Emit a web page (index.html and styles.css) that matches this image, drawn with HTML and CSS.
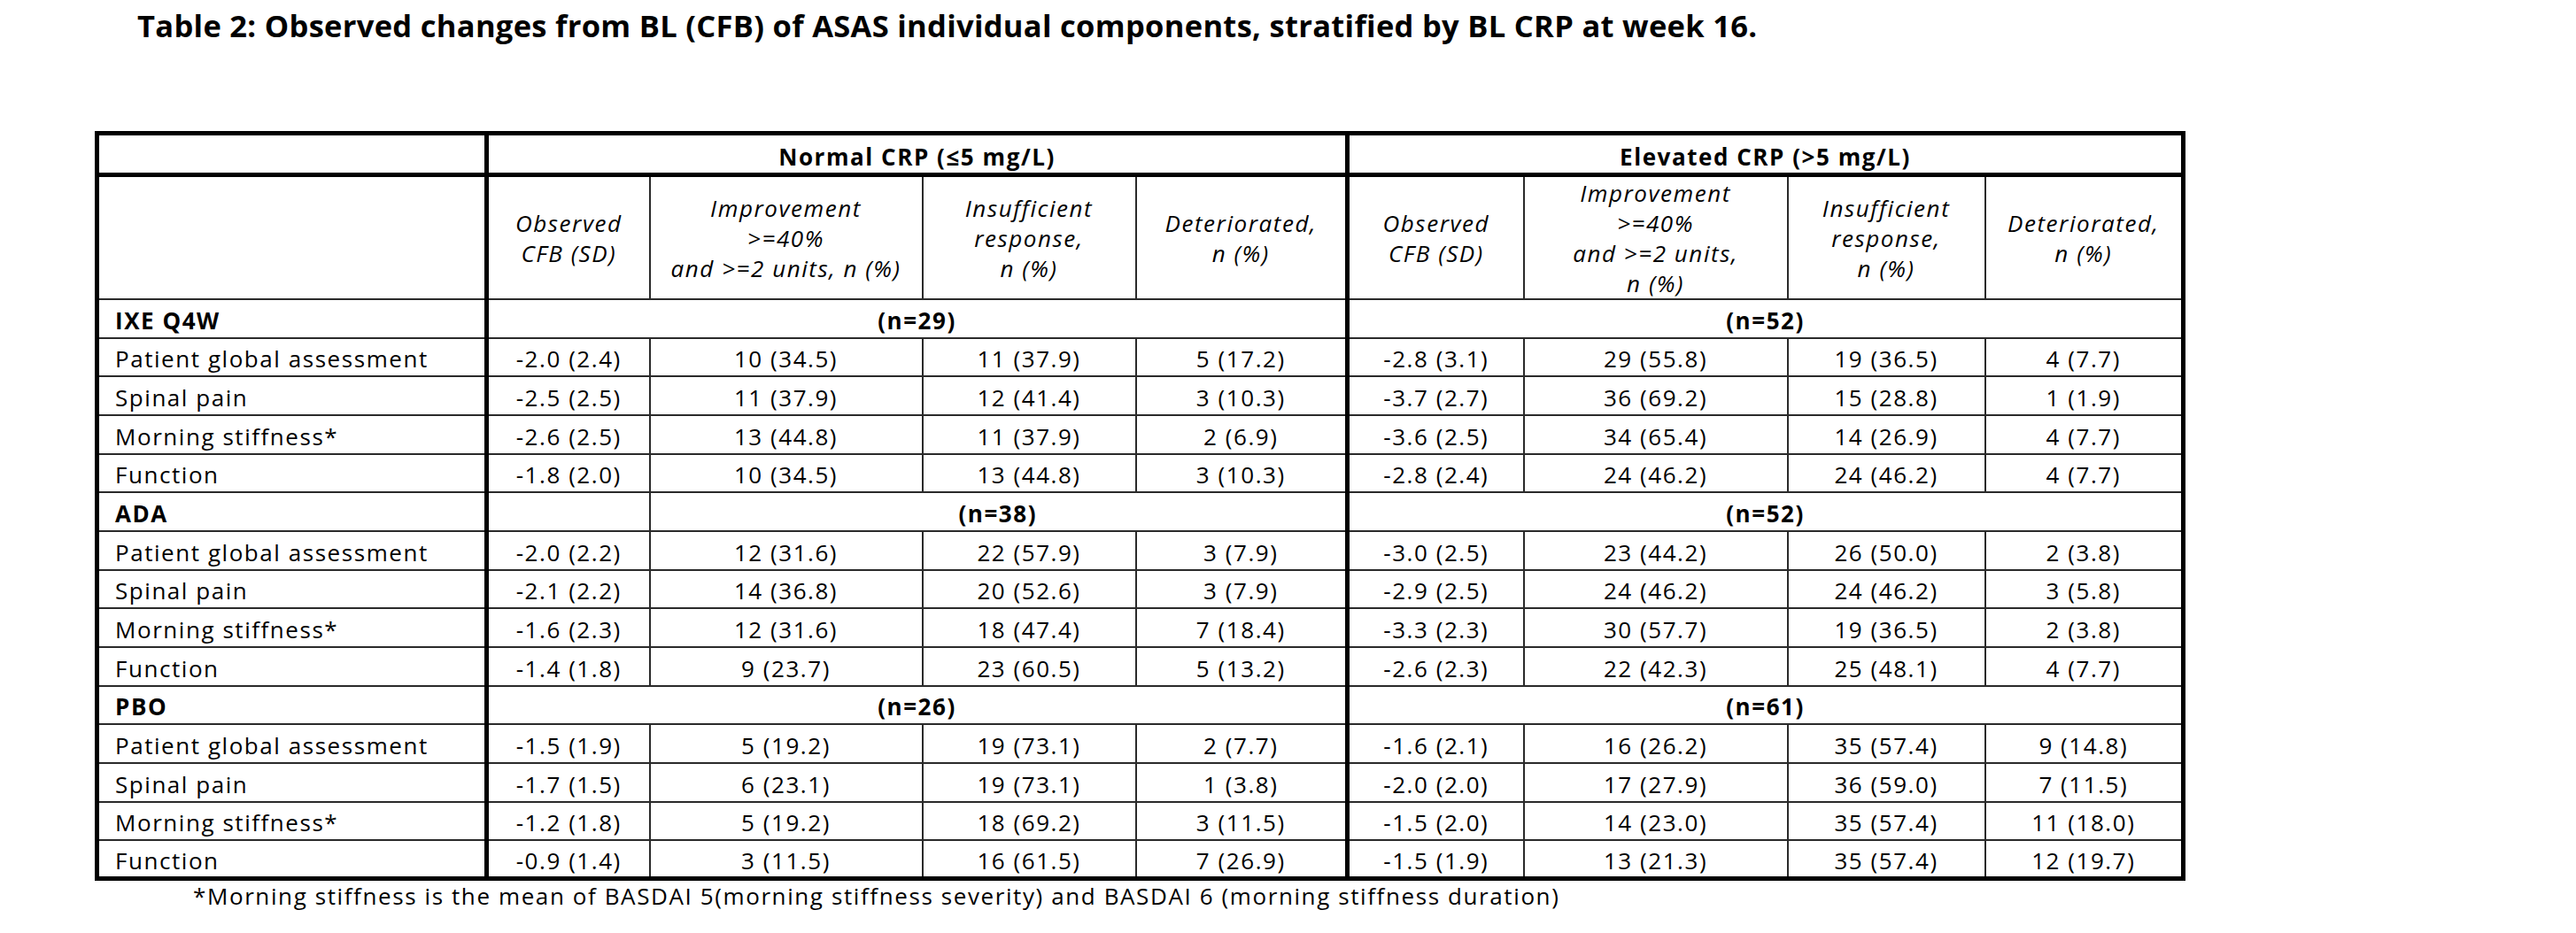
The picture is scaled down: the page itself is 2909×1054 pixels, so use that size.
FILE: index.html
```html
<!DOCTYPE html>
<html lang="en">
<head>
<meta charset="utf-8">
<title>Table 2</title>
<link rel="stylesheet" href="styles.css">
</head>
<body>
<h1 class="title">Table 2: Observed changes from BL (CFB) of ASAS individual components, stratified by BL CRP at week 16.</h1>
<table class="results">
  <colgroup>
    <col class="c-label">
    <col class="c-obs">
    <col class="c-imp">
    <col class="c-ins">
    <col class="c-det">
    <col class="c-obs2">
    <col class="c-imp2">
    <col class="c-ins2">
    <col class="c-det2">
  </colgroup>
  <thead>
    <tr class="group-head">
      <th class="label"></th>
      <th colspan="4" class="grp-end">Normal CRP (≤5 mg/L)</th>
      <th colspan="4">Elevated CRP (&gt;5 mg/L)</th>
    </tr>
    <tr class="col-head">
      <th class="label"></th>
      <th>Observed<br>CFB (SD)</th>
      <th>Improvement<br>&gt;=40%<br>and &gt;=2 units, n (%)</th>
      <th>Insufficient<br>response,<br>n (%)</th>
      <th class="grp-end">Deteriorated,<br>n (%)</th>
      <th>Observed<br>CFB (SD)</th>
      <th>Improvement<br>&gt;=40%<br>and &gt;=2 units,<br>n (%)</th>
      <th>Insufficient<br>response,<br>n (%)</th>
      <th>Deteriorated,<br>n (%)</th>
    </tr>
  </thead>
  <tbody>
    <tr class="arm">
      <th class="label">IXE Q4W</th>
      <td colspan="4" class="grp-end">(n=29)</td>
      <td colspan="4">(n=52)</td>
    </tr>
    <tr><th class="label">Patient global assessment</th><td>-2.0 (2.4)</td><td>10 (34.5)</td><td>11 (37.9)</td><td class="grp-end">5 (17.2)</td><td>-2.8 (3.1)</td><td>29 (55.8)</td><td>19 (36.5)</td><td>4 (7.7)</td></tr>
    <tr><th class="label">Spinal pain</th><td>-2.5 (2.5)</td><td>11 (37.9)</td><td>12 (41.4)</td><td class="grp-end">3 (10.3)</td><td>-3.7 (2.7)</td><td>36 (69.2)</td><td>15 (28.8)</td><td>1 (1.9)</td></tr>
    <tr><th class="label">Morning stiffness*</th><td>-2.6 (2.5)</td><td>13 (44.8)</td><td>11 (37.9)</td><td class="grp-end">2 (6.9)</td><td>-3.6 (2.5)</td><td>34 (65.4)</td><td>14 (26.9)</td><td>4 (7.7)</td></tr>
    <tr><th class="label">Function</th><td>-1.8 (2.0)</td><td>10 (34.5)</td><td>13 (44.8)</td><td class="grp-end">3 (10.3)</td><td>-2.8 (2.4)</td><td>24 (46.2)</td><td>24 (46.2)</td><td>4 (7.7)</td></tr>
    <tr class="arm">
      <th class="label">ADA</th>
      <td></td>
      <td colspan="3" class="grp-end">(n=38)</td>
      <td colspan="4">(n=52)</td>
    </tr>
    <tr><th class="label">Patient global assessment</th><td>-2.0 (2.2)</td><td>12 (31.6)</td><td>22 (57.9)</td><td class="grp-end">3 (7.9)</td><td>-3.0 (2.5)</td><td>23 (44.2)</td><td>26 (50.0)</td><td>2 (3.8)</td></tr>
    <tr><th class="label">Spinal pain</th><td>-2.1 (2.2)</td><td>14 (36.8)</td><td>20 (52.6)</td><td class="grp-end">3 (7.9)</td><td>-2.9 (2.5)</td><td>24 (46.2)</td><td>24 (46.2)</td><td>3 (5.8)</td></tr>
    <tr><th class="label">Morning stiffness*</th><td>-1.6 (2.3)</td><td>12 (31.6)</td><td>18 (47.4)</td><td class="grp-end">7 (18.4)</td><td>-3.3 (2.3)</td><td>30 (57.7)</td><td>19 (36.5)</td><td>2 (3.8)</td></tr>
    <tr><th class="label">Function</th><td>-1.4 (1.8)</td><td>9 (23.7)</td><td>23 (60.5)</td><td class="grp-end">5 (13.2)</td><td>-2.6 (2.3)</td><td>22 (42.3)</td><td>25 (48.1)</td><td>4 (7.7)</td></tr>
    <tr class="arm">
      <th class="label">PBO</th>
      <td colspan="4" class="grp-end">(n=26)</td>
      <td colspan="4">(n=61)</td>
    </tr>
    <tr><th class="label">Patient global assessment</th><td>-1.5 (1.9)</td><td>5 (19.2)</td><td>19 (73.1)</td><td class="grp-end">2 (7.7)</td><td>-1.6 (2.1)</td><td>16 (26.2)</td><td>35 (57.4)</td><td>9 (14.8)</td></tr>
    <tr><th class="label">Spinal pain</th><td>-1.7 (1.5)</td><td>6 (23.1)</td><td>19 (73.1)</td><td class="grp-end">1 (3.8)</td><td>-2.0 (2.0)</td><td>17 (27.9)</td><td>36 (59.0)</td><td>7 (11.5)</td></tr>
    <tr><th class="label">Morning stiffness*</th><td>-1.2 (1.8)</td><td>5 (19.2)</td><td>18 (69.2)</td><td class="grp-end">3 (11.5)</td><td>-1.5 (2.0)</td><td>14 (23.0)</td><td>35 (57.4)</td><td>11 (18.0)</td></tr>
    <tr><th class="label">Function</th><td>-0.9 (1.4)</td><td>3 (11.5)</td><td>16 (61.5)</td><td class="grp-end">7 (26.9)</td><td>-1.5 (1.9)</td><td>13 (21.3)</td><td>35 (57.4)</td><td>12 (19.7)</td></tr>
  </tbody>
</table>
<p class="footnote">*Morning stiffness is the mean of BASDAI 5(morning stiffness severity) and BASDAI 6 (morning stiffness duration)</p>
</body>
</html>
```

FILE: styles.css
```css
html, body {
  margin: 0;
  padding: 0;
  background: #ffffff;
  color: #000000;
}

body {
  font-family: "Open Sans", "Noto Sans", "Liberation Sans", sans-serif;
}

.title {
  font-family: "Open Sans", "Noto Sans", sans-serif;
  font-weight: 700;
  font-size: 34.5px;
  line-height: 40px;
  letter-spacing: 0.3px;
  margin: 9px 0 99px 155px;
  white-space: nowrap;
}

.results {
  margin-left: 107px;
  border-collapse: collapse;
  table-layout: fixed;
  width: 2360px;
  border: 5px solid #000;
  font-size: 26px;
  letter-spacing: 1.55px;
  line-height: 34px;
}

.c-label { width: 440px; }
.c-obs { width: 184px; }
.c-imp { width: 308px; }
.c-ins { width: 241px; }
.c-det { width: 239px; }
.c-obs2 { width: 199px; }
.c-imp2 { width: 298px; }
.c-ins2 { width: 223px; }
.c-det2 { width: 224px; }

.results th,
.results td {
  border: 2px solid #2a2a2a;
  padding: 0;
  text-align: center;
  vertical-align: middle;
  font-weight: 400;
}

.results .label {
  text-align: left;
  padding-left: 18px;
  border-right: 5px solid #000;
}

.results .grp-end {
  border-right: 5px solid #000;
}

.group-head th {
  height: 37px;
  font-weight: 700;
  border-bottom: 5px solid #000;
  padding-top: 5px;
}

.col-head th {
  height: 137px;
  font-style: italic;
}

.col-head th.label {
  font-style: normal;
}

.results tbody tr {
  height: 43.67px;
}

.results tbody th,
.results tbody td {
  padding-top: 4px;
}

.arm th,
.arm td {
  font-weight: 700 !important;
}

.footnote {
  margin: 0 0 0 218px;
  font-size: 26px;
  letter-spacing: 1.6px;
  line-height: 34px;
}
```
